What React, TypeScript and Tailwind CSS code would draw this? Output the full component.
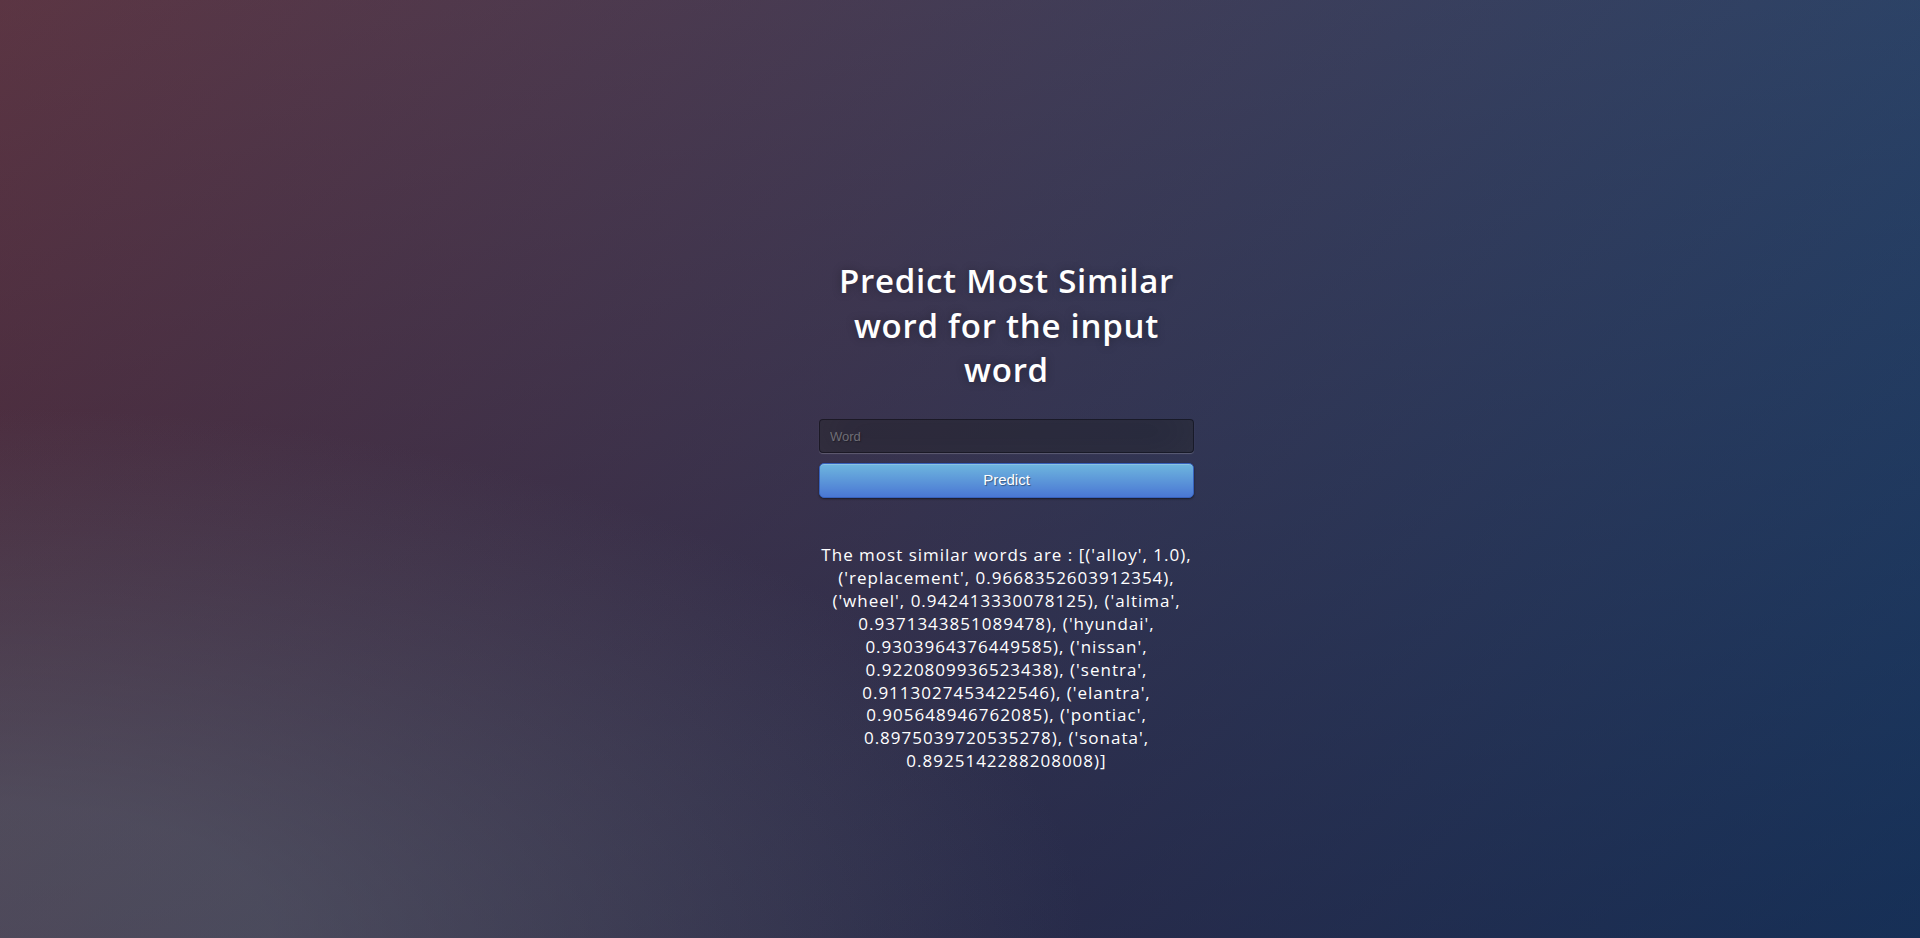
import React from "react";

const result =
  "The most similar words are : [('alloy', 1.0), ('replacement', 0.9668352603912354), ('wheel', 0.942413330078125), ('altima', 0.9371343851089478), ('hyundai', 0.9303964376449585), ('nissan', 0.9220809936523438), ('sentra', 0.9113027453422546), ('elantra', 0.905648946762085), ('pontiac', 0.8975039720535278), ('sonata', 0.8925142288208008)]";

export default function App() {
  return (
    <div className="h-screen w-full overflow-hidden bg-[#092756] bg-[radial-gradient(ellipse_farthest-corner_at_0%_100%,rgba(104,128,138,0.4)_10%,rgba(138,114,76,0)_40%),linear-gradient(to_bottom,rgba(57,173,219,0.25)_0%,rgba(42,60,87,0.4)_100%),linear-gradient(135deg,#670d10_0%,#092756_100%)] font-['Open_Sans',sans-serif]">
      <div className="flex pl-[819px] pt-[259px]">
        <div className="flex w-[375px] flex-col">
          <h1 className="m-0 text-center text-[33px] leading-[44.7px] font-semibold tracking-[0.75px] text-white [text-shadow:0_0_10px_rgba(0,0,0,0.3)]">
            Predict Most Similar word for the input word
          </h1>
          <form className="mt-[26px] flex flex-col" onSubmit={(e) => e.preventDefault()}>
            <input
              type="text"
              name="word"
              placeholder="Word"
              className="h-[34px] w-full rounded-[4px] border border-[rgba(0,0,0,0.3)] bg-[rgba(0,0,0,0.3)] px-[10px] font-['Liberation_Sans',Arial,sans-serif] text-[13px] text-white outline-none placeholder:text-[#6f6e76] shadow-[inset_0_-5px_45px_rgba(100,100,100,0.2),0_1px_1px_rgba(255,255,255,0.2)] [text-shadow:1px_1px_1px_rgba(0,0,0,0.3)]"
            />
            <button
              type="submit"
              className="mt-[10px] h-[35px] w-full rounded-[5px] border border-[#3762bc] bg-[#4a77d4] bg-[linear-gradient(to_bottom,#6eb6de,#4a77d4)] font-['Liberation_Sans',Arial,sans-serif] text-[15px] text-white shadow-[inset_0_1px_0_rgba(255,255,255,0.2),0_1px_2px_rgba(0,0,0,0.5)] [text-shadow:1px_1px_1px_rgba(0,0,0,0.4)]"
            >
              Predict
            </button>
          </form>
          <p className="mt-[46px] text-center text-[17px] leading-[22.9px] tracking-[1px] text-white">
            {result}
          </p>
        </div>
      </div>
    </div>
  );
}
